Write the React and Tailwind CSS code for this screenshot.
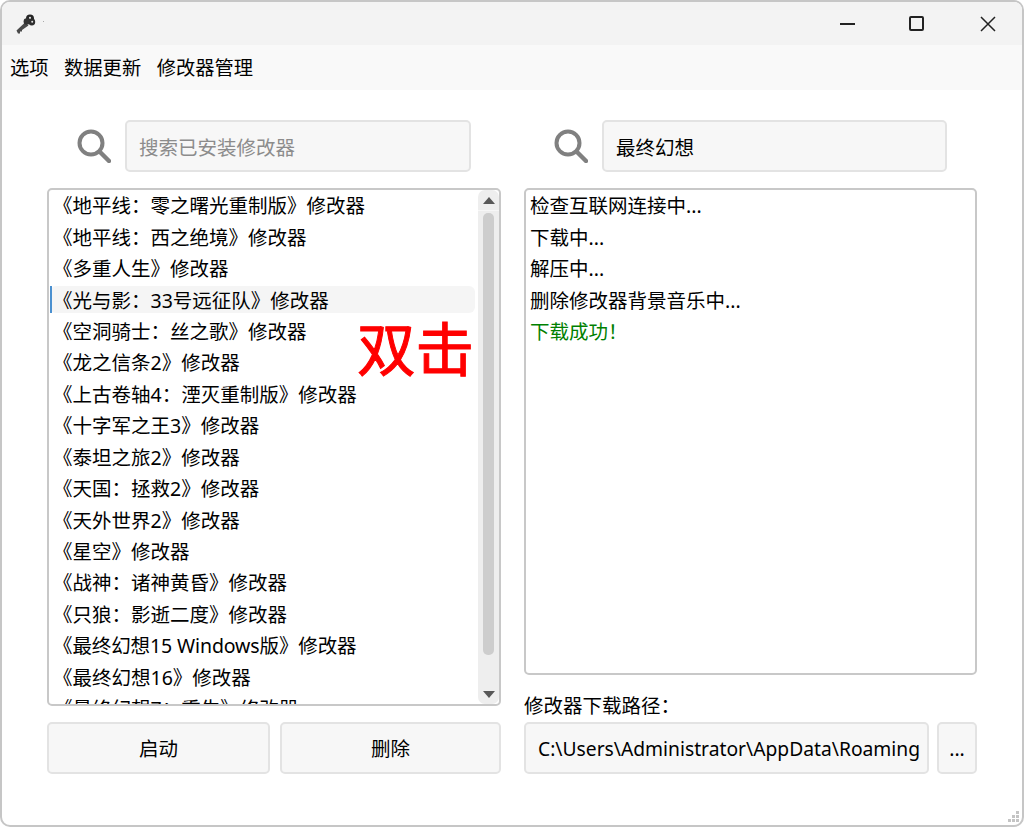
const FONT = "font-['Noto_Sans','Noto_Sans_CJK_SC',sans-serif]";

const games = [
  "《地平线：零之曙光重制版》修改器",
  "《地平线：西之绝境》修改器",
  "《多重人生》修改器",
  "《光与影：33号远征队》修改器",
  "《空洞骑士：丝之歌》修改器",
  "《龙之信条2》修改器",
  "《上古卷轴4：湮灭重制版》修改器",
  "《十字军之王3》修改器",
  "《泰坦之旅2》修改器",
  "《天国：拯救2》修改器",
  "《天外世界2》修改器",
  "《星空》修改器",
  "《战神：诸神黄昏》修改器",
  "《只狼：影逝二度》修改器",
  "《最终幻想15 Windows版》修改器",
  "《最终幻想16》修改器",
  "《最终幻想7：重生》修改器",
];

const logs = ["检查互联网连接中...", "下载中...", "解压中...", "删除修改器背景音乐中..."];

function SearchIcon() {
  return (
    <svg width="34" height="34" viewBox="0 0 34 34" fill="none" stroke="#808080" className="shrink-0">
      <circle cx="14" cy="14" r="11.5" strokeWidth="4" />
      <path d="M22.5 22.5 L32 32" strokeWidth="4.4" strokeLinecap="round" />
    </svg>
  );
}

function Key() {
  return (
    <svg width="20" height="20" viewBox="0 0 20 20" className="shrink-0">
      <path d="M0.5 16.5 L9 8.5 L12.5 11.5 L6 16 L6 17.5 L4 17.5 L4 19.5 L2 19.5 Z" fill="#4a4a4a" />
      <circle cx="14" cy="4.5" r="4" fill="#262626" />
      <circle cx="15.8" cy="8" r="3.4" fill="#2e2e2e" />
      <circle cx="10.8" cy="7.5" r="3.2" fill="#333" />
      <circle cx="14" cy="3.8" r="1.1" fill="#e2e2e2" />
      <circle cx="16.2" cy="7.8" r="1" fill="#e2e2e2" />
    </svg>
  );
}

function Btn({ className = "", children }) {
  return (
    <div className={"h-[52px] flex items-center justify-center pt-[1px] bg-[#f7f7f7] border-2 border-[#e3e3e3] rounded-[5px] text-black " + className}>
      {children}
    </div>
  );
}

function SearchRow({ text, placeholder, inputClass }) {
  return (
    <div className="flex items-center gap-[14px] px-[30px] h-[52px]">
      <SearchIcon />
      <div className={"h-[52px] flex items-center px-[12px] pt-[3px] bg-[#f7f7f7] border-2 border-[#e3e3e3] rounded-[5px] " + inputClass + (placeholder ? " text-[#8c8c8c]" : " text-black")}>
        {text}
      </div>
    </div>
  );
}

export default function App() {
  return (
    <div className={"relative w-[1024px] h-[827px] overflow-hidden bg-white border-2 border-[#c6c6c6] rounded-[10px] text-[19.5px] leading-[28px] text-black " + FONT}>
      <div className="h-[43px] bg-[#f3f3f3] flex items-center">
        <div className="ml-[14px] mt-[1px]"><Key /></div>
        <div className="ml-[7px] mb-[4px] w-[1px] h-[1px] bg-[#aaa]" />
        <div className="ml-auto flex items-center h-full">
          <div className="w-[15px] h-[2px] bg-[#222] mr-[54px]" />
          <div className="w-[15px] h-[15px] border-2 border-[#222] rounded-[2px] mr-[56px]" />
          <svg width="16" height="16" viewBox="0 0 16 16" stroke="#222" strokeWidth="1.5" className="mr-[26px]">
            <path d="M1 1 L15 15 M15 1 L1 15" />
          </svg>
        </div>
      </div>
      <div className="h-[45px] bg-[#f9f9f9] flex items-center gap-[15.5px] pl-[8px] text-[19.3px]">
        <span>选项</span>
        <span>数据更新</span>
        <span>修改器管理</span>
      </div>

      <div className="flex gap-[23px] pl-[45px] pt-[30px]">
        <div className="w-[454px] flex flex-col">
          <SearchRow text="搜索已安装修改器" placeholder inputClass="w-[347px]" />
          <div className="relative mt-[16px] h-[518px] border-2 border-[#c8c8c8] rounded-[5px] overflow-hidden flex">
            <div className="flex-1 min-w-0 overflow-hidden pt-[0.5px]">
              {games.map((g, i) => (
                <div key={g} className="relative h-[31.45px] flex items-center pl-[4px] shrink-0">
                  {i === 3 && (
                    <div className="absolute left-[1px] right-[3px] top-[1px] bottom-[3px] bg-[#f5f5f5] rounded-[6px]">
                      <div className="absolute left-0 top-0 bottom-0 w-[2px] bg-[#4a90d0]" />
                    </div>
                  )}
                  <span className={"relative whitespace-nowrap" + (i === 14 ? " tracking-[-0.11px]" : "")}>{g}</span>
                </div>
              ))}
            </div>
            <div className="w-[21px] shrink-0 bg-[#eeeeee] rounded-[7px] flex flex-col items-center">
              <div className="h-[21px] w-full flex items-center justify-center border-b border-[#f7f7f7]">
                <div className="w-0 h-0 border-x-[6.5px] border-x-transparent border-b-[7px] border-b-[#585858]" />
              </div>
              <div className="mt-[2px] h-[442px] w-[11px] bg-[#cdcdcd] rounded-[5px]" />
              <div className="flex-1 w-full flex items-end justify-center pb-[6px]">
                <div className="w-0 h-0 border-x-[6.5px] border-x-transparent border-t-[7px] border-t-[#585858]" />
              </div>
            </div>
          </div>
          <div className="mt-[16px] flex gap-[10px]">
            <Btn className="w-[223px]">启动</Btn>
            <Btn className="w-[221px]">删除</Btn>
          </div>
        </div>

        <div className="w-[453px] flex flex-col">
          <SearchRow text="最终幻想" inputClass="w-[345px]" />
          <div className="mt-[16px] h-[487px] border-2 border-[#c8c8c8] rounded-[5px] overflow-hidden pt-[0.5px]">
            {logs.map((l) => (
              <div key={l} className="h-[31.45px] flex items-center pl-[4px]">{l}</div>
            ))}
            <div className="h-[31.45px] flex items-center pl-[4px] text-[#008000]">下载成功！</div>
          </div>
          <div className="h-[47px] flex items-end pb-[2px]">修改器下载路径：</div>
          <div className="flex gap-[8px]">
            <Btn className="w-[405px] !justify-start pl-[12px] overflow-hidden whitespace-nowrap text-[19.25px]">C:\Users\Administrator\AppData\Roaming</Btn>
            <Btn className="w-[40px]">...</Btn>
          </div>
        </div>
      </div>

      <div className="absolute left-[355px] top-[308px] text-[58.5px] leading-[76px] font-normal [-webkit-text-stroke:1px_#ff0000] text-[#ff0000] whitespace-nowrap">双击</div>

      <svg width="12" height="12" viewBox="0 0 12 12" fill="#c4c4c4" className="absolute right-[2px] bottom-[2px]">
        <rect x="8" y="0" width="3" height="3" />
        <rect x="4" y="4" width="3" height="3" />
        <rect x="8" y="4" width="3" height="3" />
        <rect x="0" y="8" width="3" height="3" />
        <rect x="4" y="8" width="3" height="3" />
        <rect x="8" y="8" width="3" height="3" />
      </svg>
    </div>
  );
}
